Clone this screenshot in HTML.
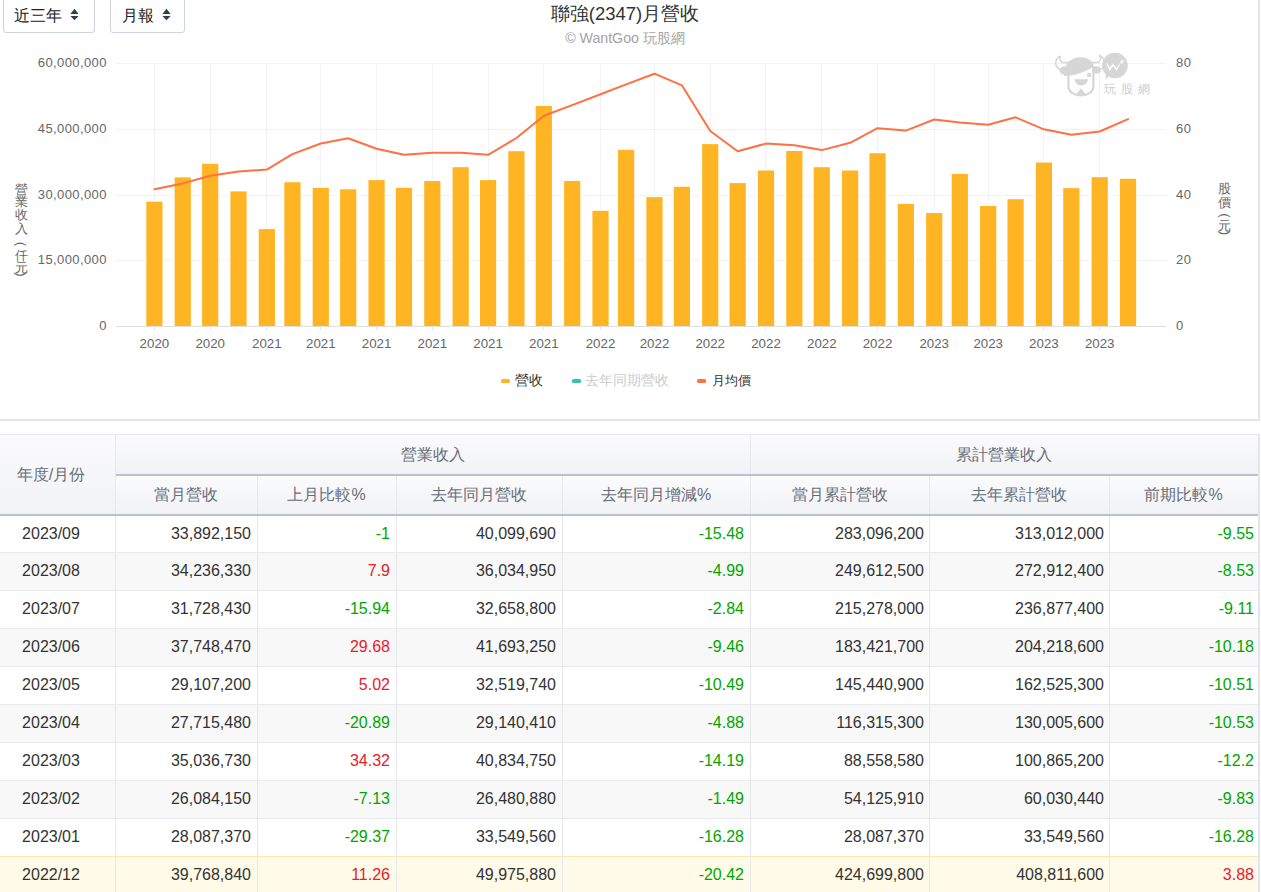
<!DOCTYPE html>
<html><head><meta charset="utf-8"><style>
html,body{margin:0;padding:0;background:#fff}
body{width:1261px;height:892px;overflow:hidden;position:relative;font-family:"Liberation Sans", sans-serif}
.t{font-size:16px}
</style></head><body>
<svg width="1261" height="420" style="position:absolute;left:0;top:0"><rect x="116" y="63" width="1050" height="1" fill="#f2f2f2"/>
<rect x="116" y="129" width="1050" height="1" fill="#f2f2f2"/>
<rect x="116" y="195" width="1050" height="1" fill="#f2f2f2"/>
<rect x="116" y="260" width="1050" height="1" fill="#f2f2f2"/>
<rect x="154" y="63" width="1" height="263" fill="#f2f2f2"/>
<rect x="210" y="63" width="1" height="263" fill="#f2f2f2"/>
<rect x="266" y="63" width="1" height="263" fill="#f2f2f2"/>
<rect x="320" y="63" width="1" height="263" fill="#f2f2f2"/>
<rect x="376" y="63" width="1" height="263" fill="#f2f2f2"/>
<rect x="432" y="63" width="1" height="263" fill="#f2f2f2"/>
<rect x="488" y="63" width="1" height="263" fill="#f2f2f2"/>
<rect x="543" y="63" width="1" height="263" fill="#f2f2f2"/>
<rect x="600" y="63" width="1" height="263" fill="#f2f2f2"/>
<rect x="654" y="63" width="1" height="263" fill="#f2f2f2"/>
<rect x="710" y="63" width="1" height="263" fill="#f2f2f2"/>
<rect x="765" y="63" width="1" height="263" fill="#f2f2f2"/>
<rect x="821" y="63" width="1" height="263" fill="#f2f2f2"/>
<rect x="877" y="63" width="1" height="263" fill="#f2f2f2"/>
<rect x="934" y="63" width="1" height="263" fill="#f2f2f2"/>
<rect x="988" y="63" width="1" height="263" fill="#f2f2f2"/>
<rect x="1043" y="63" width="1" height="263" fill="#f2f2f2"/>
<rect x="1099" y="63" width="1" height="263" fill="#f2f2f2"/>
<rect x="116" y="326" width="1050" height="1" fill="#dfdfdf"/>
<rect x="154" y="327" width="1" height="3" fill="#e3e3e3"/>
<rect x="210" y="327" width="1" height="3" fill="#e3e3e3"/>
<rect x="266" y="327" width="1" height="3" fill="#e3e3e3"/>
<rect x="320" y="327" width="1" height="3" fill="#e3e3e3"/>
<rect x="376" y="327" width="1" height="3" fill="#e3e3e3"/>
<rect x="432" y="327" width="1" height="3" fill="#e3e3e3"/>
<rect x="488" y="327" width="1" height="3" fill="#e3e3e3"/>
<rect x="543" y="327" width="1" height="3" fill="#e3e3e3"/>
<rect x="600" y="327" width="1" height="3" fill="#e3e3e3"/>
<rect x="654" y="327" width="1" height="3" fill="#e3e3e3"/>
<rect x="710" y="327" width="1" height="3" fill="#e3e3e3"/>
<rect x="765" y="327" width="1" height="3" fill="#e3e3e3"/>
<rect x="821" y="327" width="1" height="3" fill="#e3e3e3"/>
<rect x="877" y="327" width="1" height="3" fill="#e3e3e3"/>
<rect x="934" y="327" width="1" height="3" fill="#e3e3e3"/>
<rect x="988" y="327" width="1" height="3" fill="#e3e3e3"/>
<rect x="1043" y="327" width="1" height="3" fill="#e3e3e3"/>
<rect x="1099" y="327" width="1" height="3" fill="#e3e3e3"/>
<rect x="145.40" y="200.70" width="18" height="125.30" fill="#fff"/>
<rect x="146.30" y="201.70" width="16.2" height="124.30" fill="#ffb523"/>
<rect x="173.74" y="176.40" width="18" height="149.60" fill="#fff"/>
<rect x="174.64" y="177.40" width="16.2" height="148.60" fill="#ffb523"/>
<rect x="201.17" y="162.80" width="18" height="163.20" fill="#fff"/>
<rect x="202.07" y="163.80" width="16.2" height="162.20" fill="#ffb523"/>
<rect x="229.51" y="190.40" width="18" height="135.60" fill="#fff"/>
<rect x="230.41" y="191.40" width="16.2" height="134.60" fill="#ffb523"/>
<rect x="257.85" y="228.10" width="18" height="97.90" fill="#fff"/>
<rect x="258.75" y="229.10" width="16.2" height="96.90" fill="#ffb523"/>
<rect x="283.44" y="181.20" width="18" height="144.80" fill="#fff"/>
<rect x="284.34" y="182.20" width="16.2" height="143.80" fill="#ffb523"/>
<rect x="311.78" y="186.90" width="18" height="139.10" fill="#fff"/>
<rect x="312.68" y="187.90" width="16.2" height="138.10" fill="#ffb523"/>
<rect x="339.21" y="188.30" width="18" height="137.70" fill="#fff"/>
<rect x="340.11" y="189.30" width="16.2" height="136.70" fill="#ffb523"/>
<rect x="367.55" y="179.10" width="18" height="146.90" fill="#fff"/>
<rect x="368.45" y="180.10" width="16.2" height="145.90" fill="#ffb523"/>
<rect x="394.98" y="186.80" width="18" height="139.20" fill="#fff"/>
<rect x="395.88" y="187.80" width="16.2" height="138.20" fill="#ffb523"/>
<rect x="423.32" y="180.00" width="18" height="146.00" fill="#fff"/>
<rect x="424.22" y="181.00" width="16.2" height="145.00" fill="#ffb523"/>
<rect x="451.66" y="166.20" width="18" height="159.80" fill="#fff"/>
<rect x="452.56" y="167.20" width="16.2" height="158.80" fill="#ffb523"/>
<rect x="479.08" y="179.10" width="18" height="146.90" fill="#fff"/>
<rect x="479.98" y="180.10" width="16.2" height="145.90" fill="#ffb523"/>
<rect x="507.42" y="150.20" width="18" height="175.80" fill="#fff"/>
<rect x="508.32" y="151.20" width="16.2" height="174.80" fill="#ffb523"/>
<rect x="534.85" y="105.00" width="18" height="221.00" fill="#fff"/>
<rect x="535.75" y="106.00" width="16.2" height="220.00" fill="#ffb523"/>
<rect x="563.19" y="180.00" width="18" height="146.00" fill="#fff"/>
<rect x="564.09" y="181.00" width="16.2" height="145.00" fill="#ffb523"/>
<rect x="591.53" y="209.80" width="18" height="116.20" fill="#fff"/>
<rect x="592.43" y="210.80" width="16.2" height="115.20" fill="#ffb523"/>
<rect x="617.13" y="148.90" width="18" height="177.10" fill="#fff"/>
<rect x="618.03" y="149.90" width="16.2" height="176.10" fill="#ffb523"/>
<rect x="645.47" y="196.10" width="18" height="129.90" fill="#fff"/>
<rect x="646.37" y="197.10" width="16.2" height="128.90" fill="#ffb523"/>
<rect x="672.89" y="185.80" width="18" height="140.20" fill="#fff"/>
<rect x="673.79" y="186.80" width="16.2" height="139.20" fill="#ffb523"/>
<rect x="701.23" y="143.10" width="18" height="182.90" fill="#fff"/>
<rect x="702.13" y="144.10" width="16.2" height="181.90" fill="#ffb523"/>
<rect x="728.66" y="182.10" width="18" height="143.90" fill="#fff"/>
<rect x="729.56" y="183.10" width="16.2" height="142.90" fill="#ffb523"/>
<rect x="757.00" y="169.50" width="18" height="156.50" fill="#fff"/>
<rect x="757.90" y="170.50" width="16.2" height="155.50" fill="#ffb523"/>
<rect x="785.34" y="150.00" width="18" height="176.00" fill="#fff"/>
<rect x="786.24" y="151.00" width="16.2" height="175.00" fill="#ffb523"/>
<rect x="812.77" y="166.20" width="18" height="159.80" fill="#fff"/>
<rect x="813.67" y="167.20" width="16.2" height="158.80" fill="#ffb523"/>
<rect x="841.11" y="169.50" width="18" height="156.50" fill="#fff"/>
<rect x="842.01" y="170.50" width="16.2" height="155.50" fill="#ffb523"/>
<rect x="868.53" y="152.20" width="18" height="173.80" fill="#fff"/>
<rect x="869.43" y="153.20" width="16.2" height="172.80" fill="#ffb523"/>
<rect x="896.87" y="202.90" width="18" height="123.10" fill="#fff"/>
<rect x="897.77" y="203.90" width="16.2" height="122.10" fill="#ffb523"/>
<rect x="925.21" y="212.00" width="18" height="114.00" fill="#fff"/>
<rect x="926.11" y="213.00" width="16.2" height="113.00" fill="#ffb523"/>
<rect x="950.81" y="172.90" width="18" height="153.10" fill="#fff"/>
<rect x="951.71" y="173.90" width="16.2" height="152.10" fill="#ffb523"/>
<rect x="979.15" y="205.00" width="18" height="121.00" fill="#fff"/>
<rect x="980.05" y="206.00" width="16.2" height="120.00" fill="#ffb523"/>
<rect x="1006.58" y="198.20" width="18" height="127.80" fill="#fff"/>
<rect x="1007.48" y="199.20" width="16.2" height="126.80" fill="#ffb523"/>
<rect x="1034.92" y="161.50" width="18" height="164.50" fill="#fff"/>
<rect x="1035.82" y="162.50" width="16.2" height="163.50" fill="#ffb523"/>
<rect x="1062.34" y="187.10" width="18" height="138.90" fill="#fff"/>
<rect x="1063.24" y="188.10" width="16.2" height="137.90" fill="#ffb523"/>
<rect x="1090.68" y="176.20" width="18" height="149.80" fill="#fff"/>
<rect x="1091.58" y="177.20" width="16.2" height="148.80" fill="#ffb523"/>
<rect x="1119.02" y="177.80" width="18" height="148.20" fill="#fff"/>
<rect x="1119.92" y="178.80" width="16.2" height="147.20" fill="#ffb523"/>
<polyline points="154.40,189.30 182.74,183.40 210.17,175.80 238.51,171.50 266.85,169.60 292.44,154.10 320.78,143.50 348.21,138.20 376.55,148.80 403.98,154.80 432.32,152.80 460.66,152.80 488.08,154.80 516.42,138.00 543.85,115.80 572.19,105.10 600.53,94.30 626.13,84.40 654.47,73.70 681.89,85.30 710.23,131.00 737.66,151.20 766.00,143.60 794.34,145.20 821.77,150.10 850.11,142.80 877.53,128.20 905.87,130.60 934.21,119.50 959.81,122.40 988.15,124.70 1015.58,117.30 1043.92,129.30 1071.34,134.80 1099.68,131.50 1128.02,119.10" fill="none" stroke="#ff7043" stroke-width="2" stroke-linejoin="round" stroke-linecap="round"/>
<g font-family='"Liberation Sans", sans-serif' font-size="13.3" fill="#666"><text x="106.9" y="66.5" text-anchor="end" font-size="13" letter-spacing="0.4">60,000,000</text><text x="106.9" y="132.5" text-anchor="end" font-size="13" letter-spacing="0.4">45,000,000</text><text x="106.9" y="198.5" text-anchor="end" font-size="13" letter-spacing="0.4">30,000,000</text><text x="106.9" y="263.5" text-anchor="end" font-size="13" letter-spacing="0.4">15,000,000</text><text x="106.9" y="329.5" text-anchor="end" font-size="13" letter-spacing="0.4">0</text><text x="1176" y="66.5" font-size="13" letter-spacing="0.4">80</text><text x="1176" y="132.5" font-size="13" letter-spacing="0.4">60</text><text x="1176" y="198.5" font-size="13" letter-spacing="0.4">40</text><text x="1176" y="263.5" font-size="13" letter-spacing="0.4">20</text><text x="1176" y="329.5" font-size="13" letter-spacing="0.4">0</text><text x="154.4" y="348" text-anchor="middle">2020</text><text x="210.2" y="348" text-anchor="middle">2020</text><text x="266.8" y="348" text-anchor="middle">2021</text><text x="320.8" y="348" text-anchor="middle">2021</text><text x="376.6" y="348" text-anchor="middle">2021</text><text x="432.3" y="348" text-anchor="middle">2021</text><text x="488.1" y="348" text-anchor="middle">2021</text><text x="543.8" y="348" text-anchor="middle">2021</text><text x="600.5" y="348" text-anchor="middle">2022</text><text x="654.5" y="348" text-anchor="middle">2022</text><text x="710.2" y="348" text-anchor="middle">2022</text><text x="766.0" y="348" text-anchor="middle">2022</text><text x="821.8" y="348" text-anchor="middle">2022</text><text x="877.5" y="348" text-anchor="middle">2022</text><text x="934.2" y="348" text-anchor="middle">2023</text><text x="988.2" y="348" text-anchor="middle">2023</text><text x="1043.9" y="348" text-anchor="middle">2023</text><text x="1099.7" y="348" text-anchor="middle">2023</text></g>

<g transform="translate(1045,45)" fill="#d6d6d6">
 <ellipse cx="19" cy="25.5" rx="4.5" ry="4"/>
 <ellipse cx="51.5" cy="25" rx="4.5" ry="3.8"/>
 <path d="M15.5,10.8 C12,12.5 10.2,16 10.8,19.5 C11.5,23 15,25 20,25 L23,25 M15.5,10.8 C14.5,13 15,16 17.5,17.5 L53,17.5 C55.5,16 56,13 54.8,10.8 C58.5,12.5 60,16 59.5,19.5 C59,23 55.5,25 50.5,25 L48,25" fill="none" stroke="#d6d6d6" stroke-width="1.5"/>
 <path d="M19,31 C18,20 25,12.3 35.5,12.3 C44,12.3 48.5,17 48.8,21.5 C42,26 30,31 19,31 Z"/>
 <path d="M23.4,26 L23.4,41 C23.4,47 29,50.3 36,50.3 C43,50.3 48.4,47 48.4,41 L48.4,21" fill="none" stroke="#d6d6d6" stroke-width="2.2"/>
 <circle cx="44" cy="29.9" r="2.2"/>
 <path d="M29.3,34.2 L43.3,34.2 C42,38.5 39.5,40.3 36.3,40.3 C33,40.3 30.5,38.5 29.3,34.2 Z"/>
 <path d="M31,49.5 L36,43.2 L41,49.5 Z"/>
 <path d="M69.9,7.7 A12.8,12.8 0 1 1 63.5,31.5 L60.5,35 L60.8,29.5 A12.8,12.8 0 0 1 69.9,7.7 Z"/>
 <path d="M61.2,18.6 L64.6,26 L68,21 L71.3,26 L75.8,17.8 L77.3,18.6 L79,15.2 L74.8,15.8 L76,16.8 L71.3,23.3 L68,18.3 L64.7,23 L63,18.6 Z" fill="#fff"/>
 <text x="58.8" y="47.8" font-size="12" letter-spacing="5" font-family='"Liberation Sans", sans-serif' fill="#cdcdcd">玩股網</text>
</g>
<g font-size="13" fill="#666" font-family='"Liberation Sans", sans-serif'><text x="21.3" y="193.5" text-anchor="middle">營</text><text x="21.3" y="206.3" text-anchor="middle">業</text><text x="21.3" y="219.3" text-anchor="middle">收</text><text x="21.3" y="232.6" text-anchor="middle">入</text><text transform="translate(21.3,244) rotate(90)" x="0" y="0" dy="4" text-anchor="middle">(</text><text x="21.3" y="259.8" text-anchor="middle">仟</text><text x="21.3" y="271.5" text-anchor="middle">元</text><text transform="translate(21.3,274.5) rotate(90)" x="0" y="0" dy="4" text-anchor="middle">)</text></g>
<g font-size="13" fill="#666" font-family='"Liberation Sans", sans-serif'><text x="1224.5" y="192.5" text-anchor="middle">股</text><text x="1224.5" y="206.5" text-anchor="middle">價</text><text transform="translate(1224.5,215.5) rotate(90)" x="0" y="0" dy="4" text-anchor="middle">(</text><text x="1224.5" y="229.8" text-anchor="middle">元</text><text transform="translate(1224.5,233) rotate(90)" x="0" y="0" dy="4" text-anchor="middle">)</text></g></svg>

<div style="position:absolute;left:3px;top:-8px;width:90px;height:39px;border:1px solid #ced4da;border-radius:3px;background:#fff"></div>
<div style="position:absolute;left:14px;top:6px;height:20px;line-height:20px;font-size:16px;color:#222">近三年</div>
<svg style="position:absolute;left:70px;top:8px" width="9" height="13"><path d="M4.5,0.7 L8.6,5.9 L0.4,5.9 Z M0.4,7.9 L8.6,7.9 L4.5,12.3 Z" fill="#2c4158"/></svg>
<div style="position:absolute;left:110px;top:-8px;width:73px;height:39px;border:1px solid #ced4da;border-radius:3px;background:#fff"></div>
<div style="position:absolute;left:122px;top:6px;height:20px;line-height:20px;font-size:16px;color:#222">月報</div>
<svg style="position:absolute;left:162px;top:8px" width="9" height="13"><path d="M4.5,0.7 L8.6,5.9 L0.4,5.9 Z M0.4,7.9 L8.6,7.9 L4.5,12.3 Z" fill="#2c4158"/></svg>


<div style="position:absolute;left:425px;top:2px;width:400px;height:24px;line-height:24px;text-align:center;font-size:18.5px;color:#333">聯強(2347)月營收</div>
<div style="position:absolute;left:425px;top:29px;width:400px;height:18px;line-height:18px;text-align:center;font-size:14.2px;color:#a3a3a3">© WantGoo 玩股網</div>


<div style="position:absolute;left:501px;top:379px;width:9px;height:4px;border-radius:1.5px;background:#ffb523"></div>
<div style="position:absolute;left:515px;top:372px;height:18px;line-height:18px;font-size:13.5px;color:#333">營收</div>
<div style="position:absolute;left:572px;top:379px;width:9px;height:4px;border-radius:1.5px;background:#2ec4b6"></div>
<div style="position:absolute;left:585px;top:372px;height:18px;line-height:18px;font-size:13.5px;color:#cccccc">去年同期營收</div>
<div style="position:absolute;left:696.5px;top:379px;width:9.5px;height:4px;border-radius:1.5px;background:#ff7043"></div>
<div style="position:absolute;left:711.5px;top:372px;height:18px;line-height:18px;font-size:13.2px;color:#333">月均價</div>


<div style="position:absolute;left:1258px;top:0;width:2px;height:421px;background:#e2e5ea"></div>
<div style="position:absolute;left:0;top:419px;width:1260px;height:2px;background:#e2e5ea"></div>

<div class="t">
<div style="position:absolute;left:0;top:434px;width:1259px;height:1px;background:#e7e9ed"></div><div style="position:absolute;left:0;top:435px;width:1258px;height:39px;background:linear-gradient(#fbfbfc,#f1f2f5)"></div><div style="position:absolute;left:0;top:476px;width:1258px;height:38px;background:linear-gradient(#fbfbfc,#f1f2f5)"></div><div style="position:absolute;left:0;top:435px;width:115px;height:79px;background:linear-gradient(#fbfbfc,#f1f2f5)"></div><div style="position:absolute;left:-13px;top:435px;width:128px;height:80px;line-height:80px;text-align:center;color:#666f7a;">年度/月份</div><div style="position:absolute;left:116px;top:435px;width:634px;height:39px;line-height:39px;text-align:center;color:#666f7a;">營業收入</div><div style="position:absolute;left:750px;top:435px;width:508px;height:39px;line-height:39px;text-align:center;color:#666f7a;">累計營業收入</div><div style="position:absolute;left:115px;top:476px;width:142px;height:38px;line-height:38px;text-align:center;color:#666f7a;">當月營收</div><div style="position:absolute;left:257px;top:476px;width:139px;height:38px;line-height:38px;text-align:center;color:#666f7a;">上月比較%</div><div style="position:absolute;left:396px;top:476px;width:166px;height:38px;line-height:38px;text-align:center;color:#666f7a;">去年同月營收</div><div style="position:absolute;left:562px;top:476px;width:188px;height:38px;line-height:38px;text-align:center;color:#666f7a;">去年同月增減%</div><div style="position:absolute;left:750px;top:476px;width:179px;height:38px;line-height:38px;text-align:center;color:#666f7a;">當月累計營收</div><div style="position:absolute;left:929px;top:476px;width:180px;height:38px;line-height:38px;text-align:center;color:#666f7a;">去年累計營收</div><div style="position:absolute;left:1109px;top:476px;width:149px;height:38px;line-height:38px;text-align:center;color:#666f7a;">前期比較%</div><div style="position:absolute;left:0;top:516px;width:1258px;height:36px;background:#fff"></div><div style="position:absolute;left:-13px;top:516px;width:128px;height:36px;line-height:36px;text-align:center;color:#333;">2023/09</div><div style="position:absolute;left:115px;top:516px;width:136px;height:36px;line-height:36px;text-align:right;color:#333;">33,892,150</div><div style="position:absolute;left:257px;top:516px;width:133px;height:36px;line-height:36px;text-align:right;color:#00a600;">-1</div><div style="position:absolute;left:396px;top:516px;width:160px;height:36px;line-height:36px;text-align:right;color:#333;">40,099,690</div><div style="position:absolute;left:562px;top:516px;width:182px;height:36px;line-height:36px;text-align:right;color:#00a600;">-15.48</div><div style="position:absolute;left:750px;top:516px;width:174px;height:36px;line-height:36px;text-align:right;color:#333;">283,096,200</div><div style="position:absolute;left:929px;top:516px;width:175px;height:36px;line-height:36px;text-align:right;color:#333;">313,012,000</div><div style="position:absolute;left:1109px;top:516px;width:145px;height:36px;line-height:36px;text-align:right;color:#00a600;">-9.55</div><div style="position:absolute;left:0;top:552px;width:1258px;height:1px;background:#e9eaec"></div><div style="position:absolute;left:0;top:553px;width:1258px;height:37px;background:#f8f8f9"></div><div style="position:absolute;left:-13px;top:553px;width:128px;height:36px;line-height:36px;text-align:center;color:#333;">2023/08</div><div style="position:absolute;left:115px;top:553px;width:136px;height:36px;line-height:36px;text-align:right;color:#333;">34,236,330</div><div style="position:absolute;left:257px;top:553px;width:133px;height:36px;line-height:36px;text-align:right;color:#e8202a;">7.9</div><div style="position:absolute;left:396px;top:553px;width:160px;height:36px;line-height:36px;text-align:right;color:#333;">36,034,950</div><div style="position:absolute;left:562px;top:553px;width:182px;height:36px;line-height:36px;text-align:right;color:#00a600;">-4.99</div><div style="position:absolute;left:750px;top:553px;width:174px;height:36px;line-height:36px;text-align:right;color:#333;">249,612,500</div><div style="position:absolute;left:929px;top:553px;width:175px;height:36px;line-height:36px;text-align:right;color:#333;">272,912,400</div><div style="position:absolute;left:1109px;top:553px;width:145px;height:36px;line-height:36px;text-align:right;color:#00a600;">-8.53</div><div style="position:absolute;left:0;top:590px;width:1258px;height:1px;background:#e9eaec"></div><div style="position:absolute;left:0;top:591px;width:1258px;height:37px;background:#fff"></div><div style="position:absolute;left:-13px;top:591px;width:128px;height:36px;line-height:36px;text-align:center;color:#333;">2023/07</div><div style="position:absolute;left:115px;top:591px;width:136px;height:36px;line-height:36px;text-align:right;color:#333;">31,728,430</div><div style="position:absolute;left:257px;top:591px;width:133px;height:36px;line-height:36px;text-align:right;color:#00a600;">-15.94</div><div style="position:absolute;left:396px;top:591px;width:160px;height:36px;line-height:36px;text-align:right;color:#333;">32,658,800</div><div style="position:absolute;left:562px;top:591px;width:182px;height:36px;line-height:36px;text-align:right;color:#00a600;">-2.84</div><div style="position:absolute;left:750px;top:591px;width:174px;height:36px;line-height:36px;text-align:right;color:#333;">215,278,000</div><div style="position:absolute;left:929px;top:591px;width:175px;height:36px;line-height:36px;text-align:right;color:#333;">236,877,400</div><div style="position:absolute;left:1109px;top:591px;width:145px;height:36px;line-height:36px;text-align:right;color:#00a600;">-9.11</div><div style="position:absolute;left:0;top:628px;width:1258px;height:1px;background:#e9eaec"></div><div style="position:absolute;left:0;top:629px;width:1258px;height:37px;background:#f8f8f9"></div><div style="position:absolute;left:-13px;top:629px;width:128px;height:36px;line-height:36px;text-align:center;color:#333;">2023/06</div><div style="position:absolute;left:115px;top:629px;width:136px;height:36px;line-height:36px;text-align:right;color:#333;">37,748,470</div><div style="position:absolute;left:257px;top:629px;width:133px;height:36px;line-height:36px;text-align:right;color:#e8202a;">29.68</div><div style="position:absolute;left:396px;top:629px;width:160px;height:36px;line-height:36px;text-align:right;color:#333;">41,693,250</div><div style="position:absolute;left:562px;top:629px;width:182px;height:36px;line-height:36px;text-align:right;color:#00a600;">-9.46</div><div style="position:absolute;left:750px;top:629px;width:174px;height:36px;line-height:36px;text-align:right;color:#333;">183,421,700</div><div style="position:absolute;left:929px;top:629px;width:175px;height:36px;line-height:36px;text-align:right;color:#333;">204,218,600</div><div style="position:absolute;left:1109px;top:629px;width:145px;height:36px;line-height:36px;text-align:right;color:#00a600;">-10.18</div><div style="position:absolute;left:0;top:666px;width:1258px;height:1px;background:#e9eaec"></div><div style="position:absolute;left:0;top:667px;width:1258px;height:37px;background:#fff"></div><div style="position:absolute;left:-13px;top:667px;width:128px;height:36px;line-height:36px;text-align:center;color:#333;">2023/05</div><div style="position:absolute;left:115px;top:667px;width:136px;height:36px;line-height:36px;text-align:right;color:#333;">29,107,200</div><div style="position:absolute;left:257px;top:667px;width:133px;height:36px;line-height:36px;text-align:right;color:#e8202a;">5.02</div><div style="position:absolute;left:396px;top:667px;width:160px;height:36px;line-height:36px;text-align:right;color:#333;">32,519,740</div><div style="position:absolute;left:562px;top:667px;width:182px;height:36px;line-height:36px;text-align:right;color:#00a600;">-10.49</div><div style="position:absolute;left:750px;top:667px;width:174px;height:36px;line-height:36px;text-align:right;color:#333;">145,440,900</div><div style="position:absolute;left:929px;top:667px;width:175px;height:36px;line-height:36px;text-align:right;color:#333;">162,525,300</div><div style="position:absolute;left:1109px;top:667px;width:145px;height:36px;line-height:36px;text-align:right;color:#00a600;">-10.51</div><div style="position:absolute;left:0;top:704px;width:1258px;height:1px;background:#e9eaec"></div><div style="position:absolute;left:0;top:705px;width:1258px;height:37px;background:#f8f8f9"></div><div style="position:absolute;left:-13px;top:705px;width:128px;height:36px;line-height:36px;text-align:center;color:#333;">2023/04</div><div style="position:absolute;left:115px;top:705px;width:136px;height:36px;line-height:36px;text-align:right;color:#333;">27,715,480</div><div style="position:absolute;left:257px;top:705px;width:133px;height:36px;line-height:36px;text-align:right;color:#00a600;">-20.89</div><div style="position:absolute;left:396px;top:705px;width:160px;height:36px;line-height:36px;text-align:right;color:#333;">29,140,410</div><div style="position:absolute;left:562px;top:705px;width:182px;height:36px;line-height:36px;text-align:right;color:#00a600;">-4.88</div><div style="position:absolute;left:750px;top:705px;width:174px;height:36px;line-height:36px;text-align:right;color:#333;">116,315,300</div><div style="position:absolute;left:929px;top:705px;width:175px;height:36px;line-height:36px;text-align:right;color:#333;">130,005,600</div><div style="position:absolute;left:1109px;top:705px;width:145px;height:36px;line-height:36px;text-align:right;color:#00a600;">-10.53</div><div style="position:absolute;left:0;top:742px;width:1258px;height:1px;background:#e9eaec"></div><div style="position:absolute;left:0;top:743px;width:1258px;height:37px;background:#fff"></div><div style="position:absolute;left:-13px;top:743px;width:128px;height:36px;line-height:36px;text-align:center;color:#333;">2023/03</div><div style="position:absolute;left:115px;top:743px;width:136px;height:36px;line-height:36px;text-align:right;color:#333;">35,036,730</div><div style="position:absolute;left:257px;top:743px;width:133px;height:36px;line-height:36px;text-align:right;color:#e8202a;">34.32</div><div style="position:absolute;left:396px;top:743px;width:160px;height:36px;line-height:36px;text-align:right;color:#333;">40,834,750</div><div style="position:absolute;left:562px;top:743px;width:182px;height:36px;line-height:36px;text-align:right;color:#00a600;">-14.19</div><div style="position:absolute;left:750px;top:743px;width:174px;height:36px;line-height:36px;text-align:right;color:#333;">88,558,580</div><div style="position:absolute;left:929px;top:743px;width:175px;height:36px;line-height:36px;text-align:right;color:#333;">100,865,200</div><div style="position:absolute;left:1109px;top:743px;width:145px;height:36px;line-height:36px;text-align:right;color:#00a600;">-12.2</div><div style="position:absolute;left:0;top:780px;width:1258px;height:1px;background:#e9eaec"></div><div style="position:absolute;left:0;top:781px;width:1258px;height:37px;background:#f8f8f9"></div><div style="position:absolute;left:-13px;top:781px;width:128px;height:36px;line-height:36px;text-align:center;color:#333;">2023/02</div><div style="position:absolute;left:115px;top:781px;width:136px;height:36px;line-height:36px;text-align:right;color:#333;">26,084,150</div><div style="position:absolute;left:257px;top:781px;width:133px;height:36px;line-height:36px;text-align:right;color:#00a600;">-7.13</div><div style="position:absolute;left:396px;top:781px;width:160px;height:36px;line-height:36px;text-align:right;color:#333;">26,480,880</div><div style="position:absolute;left:562px;top:781px;width:182px;height:36px;line-height:36px;text-align:right;color:#00a600;">-1.49</div><div style="position:absolute;left:750px;top:781px;width:174px;height:36px;line-height:36px;text-align:right;color:#333;">54,125,910</div><div style="position:absolute;left:929px;top:781px;width:175px;height:36px;line-height:36px;text-align:right;color:#333;">60,030,440</div><div style="position:absolute;left:1109px;top:781px;width:145px;height:36px;line-height:36px;text-align:right;color:#00a600;">-9.83</div><div style="position:absolute;left:0;top:818px;width:1258px;height:1px;background:#e9eaec"></div><div style="position:absolute;left:0;top:819px;width:1258px;height:37px;background:#fff"></div><div style="position:absolute;left:-13px;top:819px;width:128px;height:36px;line-height:36px;text-align:center;color:#333;">2023/01</div><div style="position:absolute;left:115px;top:819px;width:136px;height:36px;line-height:36px;text-align:right;color:#333;">28,087,370</div><div style="position:absolute;left:257px;top:819px;width:133px;height:36px;line-height:36px;text-align:right;color:#00a600;">-29.37</div><div style="position:absolute;left:396px;top:819px;width:160px;height:36px;line-height:36px;text-align:right;color:#333;">33,549,560</div><div style="position:absolute;left:562px;top:819px;width:182px;height:36px;line-height:36px;text-align:right;color:#00a600;">-16.28</div><div style="position:absolute;left:750px;top:819px;width:174px;height:36px;line-height:36px;text-align:right;color:#333;">28,087,370</div><div style="position:absolute;left:929px;top:819px;width:175px;height:36px;line-height:36px;text-align:right;color:#333;">33,549,560</div><div style="position:absolute;left:1109px;top:819px;width:145px;height:36px;line-height:36px;text-align:right;color:#00a600;">-16.28</div><div style="position:absolute;left:0;top:856px;width:1258px;height:1px;background:#ffe7a6"></div><div style="position:absolute;left:0;top:857px;width:1258px;height:37px;background:#fffbe8"></div><div style="position:absolute;left:-13px;top:857px;width:128px;height:36px;line-height:36px;text-align:center;color:#333;">2022/12</div><div style="position:absolute;left:115px;top:857px;width:136px;height:36px;line-height:36px;text-align:right;color:#333;">39,768,840</div><div style="position:absolute;left:257px;top:857px;width:133px;height:36px;line-height:36px;text-align:right;color:#e8202a;">11.26</div><div style="position:absolute;left:396px;top:857px;width:160px;height:36px;line-height:36px;text-align:right;color:#333;">49,975,880</div><div style="position:absolute;left:562px;top:857px;width:182px;height:36px;line-height:36px;text-align:right;color:#00a600;">-20.42</div><div style="position:absolute;left:750px;top:857px;width:174px;height:36px;line-height:36px;text-align:right;color:#333;">424,699,800</div><div style="position:absolute;left:929px;top:857px;width:175px;height:36px;line-height:36px;text-align:right;color:#333;">408,811,600</div><div style="position:absolute;left:1109px;top:857px;width:145px;height:36px;line-height:36px;text-align:right;color:#e8202a;">3.88</div><div style="position:absolute;left:115px;top:435px;width:1px;height:457px;background:#e6e8ec"></div><div style="position:absolute;left:257px;top:476px;width:1px;height:416px;background:#e6e8ec"></div><div style="position:absolute;left:396px;top:476px;width:1px;height:416px;background:#e6e8ec"></div><div style="position:absolute;left:562px;top:476px;width:1px;height:416px;background:#e6e8ec"></div><div style="position:absolute;left:750px;top:435px;width:1px;height:457px;background:#e6e8ec"></div><div style="position:absolute;left:929px;top:476px;width:1px;height:416px;background:#e6e8ec"></div><div style="position:absolute;left:1109px;top:476px;width:1px;height:416px;background:#e6e8ec"></div><div style="position:absolute;left:1258px;top:434px;width:2px;height:458px;background:#e2e5ea"></div><div style="position:absolute;left:116px;top:474px;width:1142px;height:2px;background:#bcc0ca"></div><div style="position:absolute;left:0;top:514px;width:1258px;height:2px;background:#bcc0ca"></div>
</div>
</body></html>
